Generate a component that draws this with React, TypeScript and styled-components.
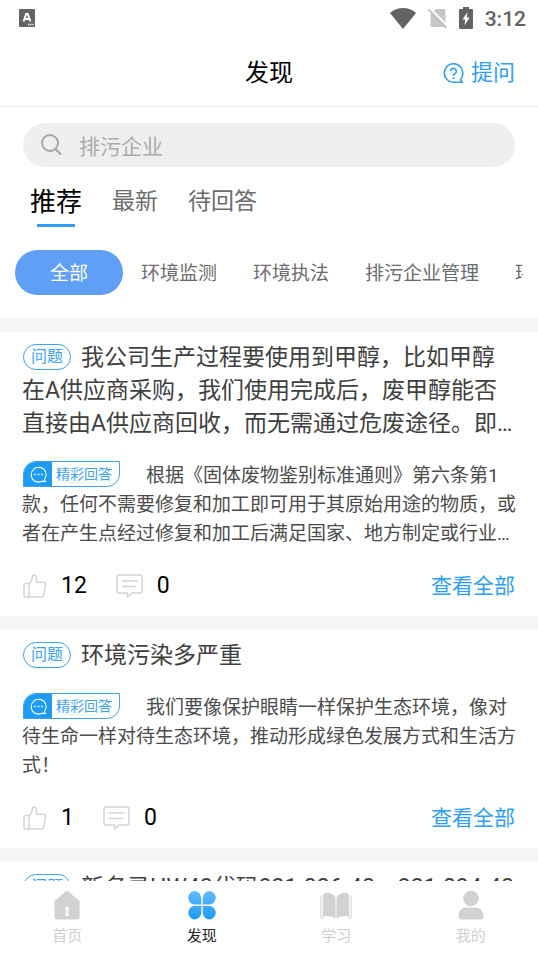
import React from 'react';
import styled, { createGlobalStyle } from 'styled-components';

const GlobalStyle = createGlobalStyle`
  * { box-sizing: border-box; }
  body { margin: 0; background: #fff; }
  body, button, input {
    font-family: Roboto, "Noto Sans CJK SC", sans-serif;
  }
  button { border: 0; padding: 0; background: none; cursor: pointer; }
  h1, h2, p { margin: 0; font-weight: 400; }
`;

const Screen = styled.div`
  display: flex;
  flex-direction: column;
  height: 100vh;
  overflow: hidden;
  background: #fff;
`;

const StatusBar = styled.div`
  display: flex;
  align-items: center;
  flex: none;
  height: 36px;
  padding: 0 12px 0 19px;
  color: #636363;
`;

const StatusIcons = styled.div`
  display: flex;
  align-items: center;
  gap: 12px;
  margin-left: auto;
`;

const Clock = styled.time`
  padding-top: 2px;
  font-size: 21px;
  line-height: 24px;
  font-weight: 500;
`;

const Header = styled.header`
  display: grid;
  grid-template-columns: 1fr auto 1fr;
  align-items: center;
  flex: none;
  height: 71px;
  padding: 4px 23px 0;
  border-bottom: 1px solid #ebebeb;
`;

const Title = styled.h1`
  grid-column: 2;
  font-size: 24px;
  line-height: 36px;
  color: #000;
`;

const AskButton = styled.button`
  justify-self: end;
  display: flex;
  align-items: center;
  gap: 7px;
  font-size: 22px;
  line-height: 32px;
  color: #2e9ff2;
`;

const Filters = styled.div`
  flex: none;
  padding: 16px 0 23px;
`;

const SearchBox = styled.label`
  display: flex;
  align-items: center;
  gap: 16px;
  height: 44px;
  margin: 0 23px;
  padding: 0 17px;
  border-radius: 22px;
  background: #efefef;
`;

const SearchInput = styled.input`
  flex: 1;
  min-width: 0;
  border: 0;
  padding: 3px 0 0;
  outline: 0;
  background: none;
  font-size: 21px;
  line-height: 32px;
  color: #333;
  &::placeholder { color: #ababab; opacity: 1; }
`;

const Tabs = styled.div`
  display: flex;
  align-items: center;
  gap: 30px;
  height: 60px;
  padding: 0 30px;
`;

const Tab = styled.button<{ $active?: boolean }>`
  position: relative;
  height: 60px;
  padding-top: 10px;
  font-size: ${p => (p.$active ? 26 : 23)}px;
  line-height: 36px;
  color: ${p => (p.$active ? '#000' : '#6c6c6e')};
  &::after {
    content: ${p => (p.$active ? "''" : 'none')};
    position: absolute;
    left: 7px;
    right: 7px;
    bottom: 0;
    height: 3px;
    background: #2e9ff2;
  }
`;

const Chips = styled.div`
  display: flex;
  margin: 23px 15px 0;
  overflow: hidden;
`;

const Chip = styled.button<{ $active?: boolean }>`
  flex: none;
  height: 45px;
  padding: 2px ${p => (p.$active ? 35 : 18)}px 0;
  border-radius: 23px;
  font-size: 19px;
  line-height: 28px;
  white-space: nowrap;
  color: ${p => (p.$active ? '#fff' : '#6c6c6e')};
  background: ${p => (p.$active ? '#5f9ff5' : 'none')};
`;

const Feed = styled.main`
  display: flex;
  flex-direction: column;
  flex: 1;
  min-height: 0;
  gap: 14px;
  padding-top: 14px;
  overflow: hidden;
  background: #f6f6f6;
`;

const Card = styled.article`
  flex: none;
  padding: 9px 22px 10px;
  background: #fff;
`;

const Question = styled.h2`
  font-size: 23px;
  line-height: 33px;
  color: #404040;
`;

const QuestionTag = styled.span`
  display: inline-block;
  height: 26px;
  margin: 3px 10px 0 1px;
  padding: 0 7px;
  border: 1px solid #3ba3f3;
  border-radius: 13px;
  vertical-align: top;
  font-size: 16px;
  line-height: 24px;
  color: #3ba3f3;
`;

const Answer = styled.p`
  margin-top: 21px;
  font-size: 19px;
  line-height: 29px;
  color: #4c4c4c;
`;

const AnswerTag = styled.span`
  display: inline-flex;
  align-items: center;
  height: 26px;
  margin: 0 26px 0 1px;
  padding-right: 7px;
  border: 1px solid #3ba3f3;
  border-radius: 13px 0 13px 0;
  overflow: hidden;
  vertical-align: top;
  font-size: 14px;
  line-height: 24px;
  color: #3ba3f3;
`;

const AnswerTagIcon = styled.span`
  display: flex;
  align-items: center;
  justify-content: center;
  width: 28px;
  height: 26px;
  margin-right: 4px;
  background: #1e9bf5;
`;

const Actions = styled.div`
  display: flex;
  align-items: center;
  gap: 29px;
  height: 40px;
  margin: 18px 1px 0;
`;

const CountButton = styled.button`
  display: flex;
  align-items: center;
  gap: 14px;
  font-size: 23px;
  line-height: 30px;
  color: #000;
`;

const AllLink = styled.a`
  margin-left: auto;
  font-size: 21px;
  line-height: 32px;
  color: #2e9ff2;
  text-decoration: none;
`;

const NavBar = styled.nav`
  display: grid;
  grid-template-columns: repeat(4, 1fr);
  flex: none;
  height: 75px;
  background: #fff;
`;

const NavItem = styled.a<{ $active?: boolean }>`
  display: flex;
  flex-direction: column;
  align-items: center;
  gap: 4px;
  padding-top: 8px;
  font-size: 15px;
  line-height: 22px;
  color: ${p => (p.$active ? '#222' : '#cfcfcf')};
  text-decoration: none;
`;

const KeyboardIcon = () => (
  <svg width="16" height="18" viewBox="0 0 16 18" aria-hidden="true">
    <rect width="16" height="18" rx="1" fill="#636363" />
    <path d="M4.6 12.5 7.2 5h1.6l2.6 7.5M5.6 10h4.8" fill="none" stroke="#fff" strokeWidth="1.9" />
    <path d="M9 15.5h1.3M11.2 15.5h1.3M13.4 15.5h1.3" stroke="#fff" strokeWidth="1.3" />
  </svg>
);

const WifiIcon = () => (
  <svg width="26" height="21" viewBox="0 0 26 21" aria-hidden="true">
    <path d="M0 5C7-1.6 19-1.6 26 5L13 21Z" fill="#636363" />
  </svg>
);

const NoSimIcon = () => (
  <svg width="19" height="21" viewBox="0 0 19 21" aria-hidden="true">
    <path d="M2.5 6.5 8 1h8a1.500 1.500 0 0 1 1.500 1.500V19H4a1.500 1.500 0 0 1-1.500-1.500Z" fill="#c6c6c6" />
    <path d="M1.500 0 20 18.500" stroke="#fff" strokeWidth="2" />
    <path d="M.5 1.500 18.500 20" stroke="#bdbdbd" strokeWidth="1.600" />
  </svg>
);

const BatteryIcon = () => (
  <svg width="14" height="22" viewBox="0 0 14 22" aria-hidden="true">
    <path d="M4 0h6v2h3a1 1 0 0 1 1 1v18a1 1 0 0 1-1 1H1a1 1 0 0 1-1-1V3a1 1 0 0 1 1-1h3Z" fill="#636363" />
    <path d="M8.500 5 3.500 12.500H6.300L5.500 18.500 10.500 10.500H7.700Z" fill="#fff" />
  </svg>
);

const AskIcon = () => (
  <svg width="21" height="21" viewBox="0 0 21 21" fill="none" stroke="#2e9ff2" strokeWidth="1.600" aria-hidden="true">
    <path d="M19.300 19.300H10.500A9.300 9.300 0 1 1 19.800 10.500C19.800 13 19 15 17.500 16.800Z" strokeLinejoin="round" />
    <path d="M7.600 8.300a2.900 2.900 0 1 1 4.500 2.400c-1.100.7-1.600 1.200-1.600 2.300" />
    <path d="M10.500 14.300v1.700" strokeWidth="1.800" />
  </svg>
);

const SearchIcon = () => (
  <svg width="23" height="22" viewBox="0 0 23 22" fill="none" stroke="#a5a5a5" strokeWidth="1.900" aria-hidden="true">
    <circle cx="10" cy="9" r="8" />
    <path d="m15.500 15 5.500 5.500" strokeWidth="2.200" />
  </svg>
);

const BubbleIcon = () => (
  <svg width="17" height="17" viewBox="0 0 17 17" fill="none" stroke="#fff" strokeWidth="1.100" aria-hidden="true">
    <path d="M14.500 13.200A7.400 7.400 0 1 0 12.300 15.100L15.400 15.700Z" strokeLinejoin="round" />
    <path d="M4.200 8.500h1.600M7.700 8.500h1.600M11.200 8.500h1.600" strokeWidth="1.600" />
  </svg>
);

const LikeIcon = () => (
  <svg width="24" height="24" viewBox="0 0 24 24" fill="none" stroke="#d3d3d3" strokeWidth="1.500" strokeLinejoin="round" aria-hidden="true">
    <path d="M6 9.500H2.500A1.500 1.500 0 0 0 1 11v10.500A1.500 1.500 0 0 0 2.500 23H18.300a2.500 2.500 0 0 0 2.400-1.900L22.600 10.600A2 2 0 0 0 20.600 8.300H13.500V3.500A2.500 2.500 0 0 0 11 1C9.700 1 9.400 2.200 9.200 4 8.900 6.800 7.800 8.500 6 9.500V23" />
  </svg>
);

const CommentIcon = () => (
  <svg width="27" height="24" viewBox="0 0 27 24" fill="none" stroke="#d3d3d3" strokeWidth="1.500" strokeLinejoin="round" aria-hidden="true">
    <path d="M2.500 1h22A1.500 1.500 0 0 1 26 2.500v15a1.500 1.500 0 0 1-1.500 1.500H16L11.500 23V19h-9A1.500 1.500 0 0 1 1 17.500v-15A1.500 1.500 0 0 1 2.500 1Z" />
    <path d="M6 7h16M6 12.500h14" />
  </svg>
);

const HomeIcon = () => (
  <svg width="32" height="32" viewBox="0 0 32 32" aria-hidden="true">
    <path d="M14.700 2.600a2 2 0 0 1 2.600 0L28 11.500a1.700 1.700 0 0 1 .6 1.300V28a2.500 2.500 0 0 1-2.500 2.500H6A2.500 2.500 0 0 1 3.500 28V12.800A1.700 1.700 0 0 1 4.100 11.500Z" fill="#d2d2d2" />
    <path d="M16 19v7" stroke="#fff" strokeWidth="3" strokeLinecap="round" />
    <path d="M15.600 21v3.500" stroke="#d2d2d2" strokeWidth=".7" />
  </svg>
);

const DiscoverIcon = () => (
  <svg width="32" height="32" viewBox="0 0 32 32" aria-hidden="true">
    <defs>
      <linearGradient id="petals" x1="0" y1="0" x2="0" y2="32" gradientUnits="userSpaceOnUse">
        <stop offset="0" stopColor="#65bdff" />
        <stop offset="1" stopColor="#1e98f6" />
      </linearGradient>
    </defs>
    <path fill="url(#petals)" d="M8 2a7.200 7.200 0 0 1 7.300 7.200V15.500H8.500A6.800 6.800 0 0 1 8 2ZM24 2a6.800 6.800 0 0 1-.5 13.500H16.700V9.200A7.200 7.200 0 0 1 24 2ZM8.500 17H15.300V23.300A7.200 7.200 0 0 1 8 30.500 6.800 6.800 0 0 1 8.500 17ZM16.700 17H23.500A6.800 6.800 0 0 1 24 30.500a7.200 7.200 0 0 1-7.300-7.200Z" />
  </svg>
);

const StudyIcon = () => (
  <svg width="32" height="32" viewBox="0 0 32 32" aria-hidden="true">
    <path d="M2.800 6 5.500 3.500C10 3.500 13.500 5 15.500 8.500V30C13 27.500 9 26.500 2.800 27.500Z" fill="#d2d2d2" />
    <path d="M29.200 6 26.500 3.500C22 3.500 18.500 5 16.500 8.500V30C19 27.500 23 26.500 29.200 27.500Z" fill="#d2d2d2" />
    <path d="M1 6.500V28.500H4M31 6.500V28.500H28" fill="none" stroke="#dcdcdc" strokeWidth="1.400" />
  </svg>
);

const MineIcon = () => (
  <svg width="32" height="32" viewBox="0 0 32 32" aria-hidden="true">
    <circle cx="16" cy="9.500" r="7.800" fill="#d2d2d2" />
    <path d="M11 18.500h10c4.500 0 7.500 4 7.500 9a3 3 0 0 1-3 3H6.500a3 3 0 0 1-3-3c0-5 3-9 7.500-9Z" fill="#d2d2d2" />
  </svg>
);

const categories = ['全部', '环境监测', '环境执法', '排污企业管理', '环境影响评价'];

const posts = [
  {
    question: '我公司生产过程要使用到甲醇，比如甲醇在A供应商采购，我们使用完成后，废甲醇能否直接由A供应商回收，而无需通过危废途径。即…',
    answer: '根据《固体废物鉴别标准通则》第六条第1款，任何不需要修复和加工即可用于其原始用途的物质，或者在产生点经过修复和加工后满足国家、地方制定或行业…',
    likes: 12,
    comments: 0,
  },
  {
    question: '环境污染多严重',
    answer: '我们要像保护眼睛一样保护生态环境，像对待生命一样对待生态环境，推动形成绿色发展方式和生活方式！',
    likes: 1,
    comments: 0,
  },
  { question: '新名录HW48代码321-026-48、321-034-48' },
];

const navItems = [
  { label: '首页', Icon: HomeIcon },
  { label: '发现', Icon: DiscoverIcon },
  { label: '学习', Icon: StudyIcon },
  { label: '我的', Icon: MineIcon },
];

export default function App() {
  return (
    <Screen>
      <GlobalStyle />
      <StatusBar>
        <KeyboardIcon />
        <StatusIcons>
          <WifiIcon />
          <NoSimIcon />
          <BatteryIcon />
          <Clock>3:12</Clock>
        </StatusIcons>
      </StatusBar>
      <Header>
        <Title>发现</Title>
        <AskButton type="button"><AskIcon />提问</AskButton>
      </Header>
      <Filters>
        <SearchBox>
          <SearchIcon />
          <SearchInput type="text" placeholder="排污企业" aria-label="搜索" />
        </SearchBox>
        <Tabs role="tablist">
          <Tab type="button" role="tab" aria-selected="true" $active>推荐</Tab>
          <Tab type="button" role="tab" aria-selected="false">最新</Tab>
          <Tab type="button" role="tab" aria-selected="false">待回答</Tab>
        </Tabs>
        <Chips>
          {categories.map((name, i) => (
            <Chip key={name} type="button" aria-pressed={i === 0} $active={i === 0}>{name}</Chip>
          ))}
        </Chips>
      </Filters>
      <Feed>
        {posts.map(post => (
          <Card key={post.question}>
            <Question><QuestionTag>问题</QuestionTag>{post.question}</Question>
            {post.answer && (
              <>
                <Answer>
                  <AnswerTag><AnswerTagIcon><BubbleIcon /></AnswerTagIcon>精彩回答</AnswerTag>
                  {post.answer}
                </Answer>
                <Actions>
                  <CountButton type="button" aria-label={`点赞 ${post.likes}`}><LikeIcon />{post.likes}</CountButton>
                  <CountButton type="button" aria-label={`评论 ${post.comments}`}><CommentIcon />{post.comments}</CountButton>
                  <AllLink href="#all">查看全部</AllLink>
                </Actions>
              </>
            )}
          </Card>
        ))}
      </Feed>
      <NavBar>
        {navItems.map(({ label, Icon }) => (
          <NavItem key={label} href={`#${label}`} $active={label === '发现'}><Icon />{label}</NavItem>
        ))}
      </NavBar>
    </Screen>
  );
}
